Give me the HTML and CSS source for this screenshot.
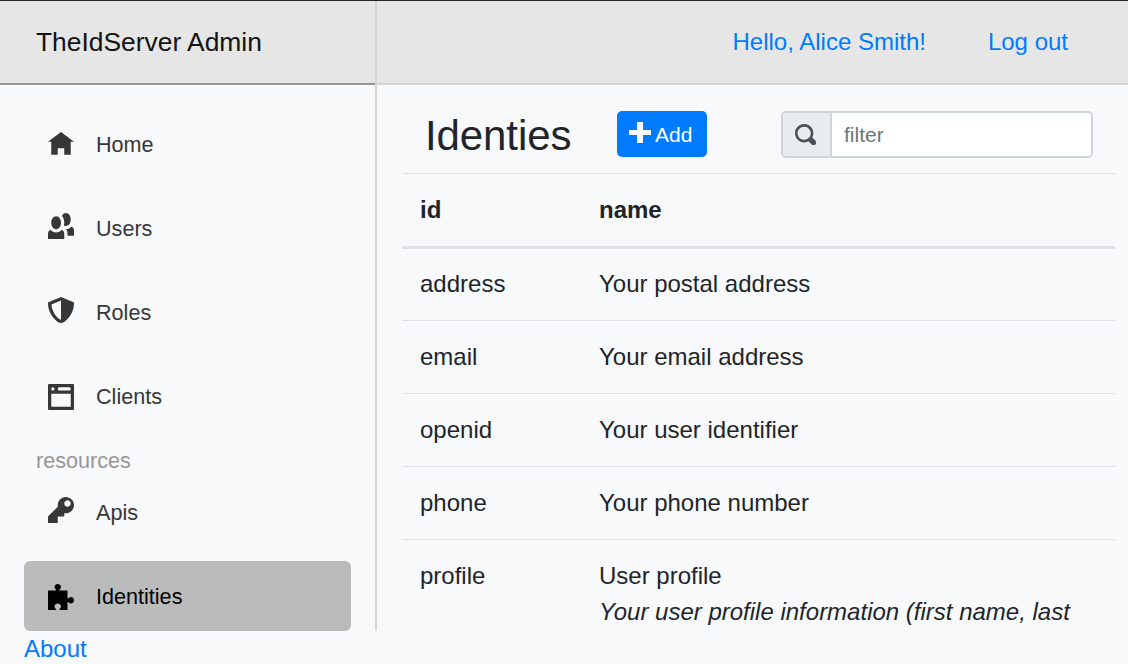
FILE: index.html
```html
<!DOCTYPE html>
<html lang="en">
<head>
<meta charset="utf-8">
<title>TheIdServer Admin</title>
<link rel="stylesheet" href="styles.css">
</head>
<body>
<div class="app">
  <aside class="sidebar">
    <div class="brand">TheIdServer Admin</div>
    <nav class="nav">
      <a class="item"><svg class="icon icon-home" viewBox="0 0 8 8"><path d="M4 0l-4 3h1v4h2v-2h2v2h2v-4.03l1 .03-4-3z"/></svg>Home</a>
      <a class="item"><svg class="icon icon-high" viewBox="0 0 8 8"><path d="M5.5 0c-.51 0-.95.35-1.22.88.45.54.72 1.28.72 2.13 0 .29-.03.55-.09.81.19.11.38.19.59.19.83 0 1.5-.9 1.5-2s-.67-2-1.5-2zm-3 1c-.83 0-1.5.9-1.5 2s.67 2 1.5 2 1.5-.9 1.5-2-.67-2-1.5-2zm4.75 3.16c-.43.51-1.02.82-1.69.84.27.38.44.84.44 1.34v.66h2v-1.66c0-.52-.31-.97-.75-1.19zm-6.5 1c-.44.22-.75.67-.75 1.19v1.66h5v-1.66c0-.52-.31-.97-.75-1.19-.45.53-1.06.84-1.75.84s-1.3-.32-1.75-.84z"/></svg>Users</a>
      <a class="item"><svg class="icon icon-high" viewBox="0 0 8 8"><path d="M4 0l-.19.09-3.5 1.47-.31.13v.31c0 1.66.67 3.12 1.47 4.19.4.53.83.97 1.25 1.28.42.31.83.53 1.28.53.46 0 .86-.22 1.28-.53.42-.31.85-.75 1.25-1.28.8-1.07 1.47-2.53 1.47-4.19v-.31l-.31-.13-3.5-1.47-.19-.09zm0 1.09v5.91c-.04 0-.33-.07-.66-.31s-.71-.63-1.06-1.09c-.64-.85-1.14-2.03-1.22-3.28l2.94-1.22z"/></svg>Roles</a>
      <a class="item"><svg class="icon icon-low" viewBox="0 0 8 8"><path fill-rule="evenodd" d="M.2 0h7.6l.2.2v7.6l-.2.2h-7.6l-.2-.2v-7.6zM1.5 1a.5.5 0 1 0 0 1 .5.5 0 0 0 0-1zM3.5 1a.5.5 0 0 0 0 1h3a.5.5 0 0 0 0-1zM1 3v4h6v-4z"/></svg>Clients</a>
      <div class="section">resources</div>
      <a class="item"><svg class="icon icon-high" viewBox="0 0 8 8"><path d="M5.5 0c-1.38 0-2.5 1.12-2.5 2.5 0 .16 0 .32.03.47l-3.03 3.03v2h3v-2h2v-1l.03-.03c.15.03.31.03.47.03 1.38 0 2.5-1.12 2.5-2.5s-1.12-2.5-2.5-2.5zm.5 1c.55 0 1 .45 1 1s-.45 1-1 1-1-.45-1-1 .45-1 1-1z"/></svg>Apis</a>
      <a class="item active"><svg class="icon icon-low" viewBox="0 0 8 8"><path d="M3 0c-.55 0-1 .42-1 .94 0 .4.5.7.5 1.06h-2.5v6h2.5c0-.36-.5-.66-.5-1.06 0-.52.45-.94 1-.94s1 .42 1 .94c0 .4-.5.7-.5 1.06h2.5v-2.5c.36 0 .66.5 1.06.5.52 0 .94-.45.94-1s-.42-1-.94-1c-.4 0-.7.5-1.06.5v-2.5h-2.5c0-.36.5-.66.5-1.06 0-.52-.45-.94-1-.94z"/></svg>Identities</a>
    </nav>
  </aside>
  <main class="main">
    <header class="topbar"><a>Hello, Alice Smith!</a><a>Log out</a></header>
    <div class="content">
      <div class="toolbar">
        <h1 class="title">Identies</h1>
        <button class="add"><svg class="plus" viewBox="0 0 22 21"><path d="M8 0h6v8h8v5h-8v8H8v-8H0V8h8z"/></svg>Add</button>
        <div class="search">
          <span class="search-icon"><svg class="glass" viewBox="0 0 8 8"><path d="M3.5 0c-1.93 0-3.5 1.57-3.5 3.5s1.57 3.5 3.5 3.5c.59 0 1.17-.14 1.66-.41a1 1 0 0 0 .13.13l1 1a1.02 1.02 0 1 0 1.44-1.44l-1-1a1 1 0 0 0-.16-.13c.27-.49.44-1.06.44-1.66 0-1.93-1.55-3.5-3.5-3.5zm0 1c1.39 0 2.5 1.11 2.5 2.5 0 .66-.24 1.27-.66 1.72l-.03.03a1 1 0 0 0-.13.13c-.44.4-1.04.63-1.69.63-1.39 0-2.5-1.11-2.5-2.5s1.11-2.5 2.5-2.5z"/></svg></span>
          <input class="filter" type="text" placeholder="filter">
        </div>
      </div>
      <div class="table">
        <div class="row head"><span>id</span><span>name</span></div>
        <div class="row first"><span>address</span><span>Your postal address</span></div>
        <div class="row"><span>email</span><span>Your email address</span></div>
        <div class="row"><span>openid</span><span>Your user identifier</span></div>
        <div class="row"><span>phone</span><span>Your phone number</span></div>
        <div class="row last"><span>profile</span><span>User profile<br><em>Your user profile information (first name, last</em></span></div>
      </div>
    </div>
  </main>
</div>
<footer class="footer"><a>About</a></footer>
</body>
</html>
```

FILE: styles.css
```css
* { box-sizing: border-box; }
body {
  margin: 0;
  height: 664px;
  overflow: hidden;
  border-top: 1px solid #27242a;
  background: #f8f9fb;
  color: #212529;
  font: 24px/36px "Liberation Sans", Arial, sans-serif;
}
a { color: #007bff; }
.app { display: flex; height: 630px; overflow: hidden; }

.sidebar { width: 377px; flex: none; border-right: 2px solid #d5d5d5; }
.brand {
  height: 84px;
  padding: 0 36px;
  border-bottom: 2px solid #979797;
  background: #e6e6e6;
  color: #131313;
  font-size: 26.4px;
  line-height: 82px;
}
.nav { padding: 24px 24px 0; font-size: 21.6px; }
.item {
  display: flex;
  align-items: center;
  height: 70px;
  margin-bottom: 14px;
  padding: 2px 0 0 24px;
  border-radius: 6px;
  color: #373737;
}
.section { height: 36px; margin: -2px 12px 0; color: #979797; }
.section + .item { margin-top: -2px; }
.active { background: #babcbb; color: #000; }
.icon { width: 26px; height: 26px; margin-right: 22px; fill: currentColor; }
.icon-home { margin-top: 0; }
.icon-high { margin-bottom: 6px; }
.icon-low { margin-top: 0; }

.main { flex: 1; min-width: 0; }
.topbar {
  display: flex;
  justify-content: flex-end;
  gap: 62px;
  height: 84px;
  padding-right: 60px;
  border-bottom: 2px solid #d5d5d5;
  background: #e6e6e6;
  line-height: 82px;
}
.content { padding: 26px 13px 0 25px; }
.toolbar { display: flex; align-items: flex-start; height: 62px; padding: 0 22px 0 23px; }
.title { width: 192px; margin: 0; font-size: 42px; font-weight: 400; line-height: 50px; letter-spacing: -0.1px; }
.add {
  display: flex;
  align-items: center;
  width: 90px;
  height: 46px;
  padding: 2px 0 0 12px;
  border: 0;
  border-radius: 5px;
  background: #007bff;
  color: #fff;
  font: 21px/32px "Liberation Sans", Arial, sans-serif;
}
.plus { width: 22px; height: 21px; margin: 0 4px 5px 0; fill: #fff; }
.search {
  display: flex;
  width: 312px;
  height: 47px;
  margin-left: auto;
  overflow: hidden;
  border: 2px solid #ced4da;
  border-radius: 5px;
  background: #fff;
}
.search-icon {
  display: flex;
  width: 49px;
  padding: 11px 0 0 12px;
  border-right: 2px solid #ced4da;
  background: #e9ecef;
}
.glass { width: 21px; height: 21px; fill: #495057; }
.filter {
  flex: 1;
  min-width: 0;
  padding: 0 12px;
  border: 0;
  background: #fff;
  color: #495057;
  font: 21px "Liberation Sans", Arial, sans-serif;
}
.filter::placeholder { color: #6c757d; opacity: 1; }

.row {
  display: grid;
  grid-template-columns: 179px 1fr;
  height: 73px;
  padding: 18px 0 0 18px;
  border-bottom: 1px solid #dee2e6;
  white-space: nowrap;
}
.head {
  height: 76px;
  border-top: 1px solid #dee2e6;
  border-bottom: 3px solid #dee2e6;
  font-weight: 700;
}
.first { height: 72px; padding-top: 17px; }
.last { height: 110px; }
.footer { height: 33px; padding-left: 24px; }
```
